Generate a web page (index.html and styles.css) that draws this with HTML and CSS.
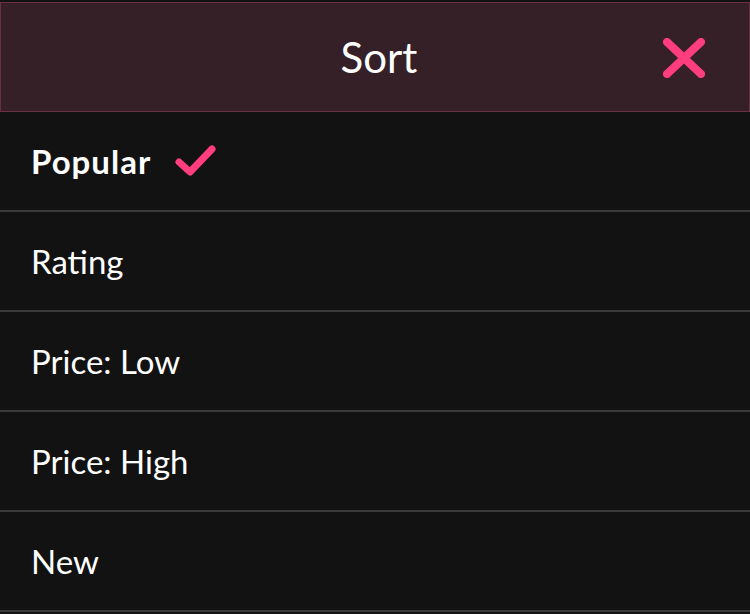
FILE: index.html
```html
<!DOCTYPE html>
<html lang="en">
<head>
<meta charset="utf-8">
<title>Sort</title>
<link rel="stylesheet" href="styles.css">
</head>
<body>
<div class="sheet">
  <header class="header">
    <h1 class="title">Sort</h1>
    <button class="close" aria-label="Close">
      <svg width="42" height="40" viewBox="0 0 42 40"><path d="M4 4 L38 36 M38 4 L4 36" stroke="#ff3d7f" stroke-width="8" stroke-linecap="round" fill="none"/></svg>
    </button>
  </header>
  <ul class="options">
    <li class="option selected"><span class="label">Popular</span>
      <svg class="check" width="42" height="34" viewBox="0 0 42 34"><path d="M4 18 L15 28 L37 5" stroke="#ff3d7f" stroke-width="7" stroke-linecap="round" stroke-linejoin="round" fill="none"/></svg>
    </li>
    <li class="option">Rating</li>
    <li class="option">Price: Low</li>
    <li class="option">Price: High</li>
    <li class="option">New</li>
  </ul>
</div>
</body>
</html>
```

FILE: styles.css
```css
* { box-sizing: border-box; }
html, body { margin: 0; padding: 0; background: #121212; }
body { font-family: "Lato", "Noto Sans", sans-serif; color: #ffffff; }
.sheet { padding-top: 2px; }
.header {
  position: relative;
  height: 110px;
  background: #362027;
  border: 1px solid #6b2e45;
  display: flex;
  align-items: center;
  justify-content: center;
}
.title { margin: 0 0 0 8px; font-size: 42px; font-weight: 400; }
.close {
  position: absolute;
  right: 44px;
  top: 35px;
  background: none;
  border: 0;
  padding: 0;
  display: flex;
}
.options { list-style: none; margin: 0; padding: 0; }
.option {
  height: 100px;
  border-bottom: 2px solid #3a3a3a;
  display: flex;
  align-items: center;
  padding-left: 31px;
  font-size: 33px;
  font-weight: 400;
}
.option.selected { font-weight: 700; }
.option.selected .label { letter-spacing: 1px; }
.check { margin-left: 24px; }
```
